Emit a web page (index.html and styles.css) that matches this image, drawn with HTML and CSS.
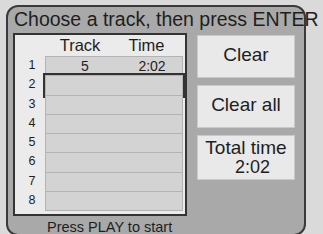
FILE: index.html
```html
<!DOCTYPE html>
<html>
<head>
  <meta name="viewport" content="width=device-width">
  <link rel="stylesheet" href="styles.css">
</head>
<body>

<div class="panel">
  <div class="title">Choose a track, then press ENTER</div>

  <div class="main">
    <div class="left">
      <div class="list">
        <div class="head">
          <span class="num"></span>
          <div class="cols">
            <span class="col-track">Track</span>
            <span class="col-time">Time</span>
          </div>
        </div>
        <div class="row"><span class="num">1</span><div class="cell cols"><span class="col-track">5</span><span class="col-time">2:02</span></div></div>
        <div class="row"><span class="num">2</span><div class="cell selected"></div></div>
        <div class="row"><span class="num">3</span><div class="cell"></div></div>
        <div class="row"><span class="num">4</span><div class="cell"></div></div>
        <div class="row"><span class="num">5</span><div class="cell"></div></div>
        <div class="row"><span class="num">6</span><div class="cell"></div></div>
        <div class="row"><span class="num">7</span><div class="cell"></div></div>
        <div class="row"><span class="num">8</span><div class="cell"></div></div>
      </div>
      <div class="hint">Press PLAY to start</div>
    </div>

    <div class="buttons">
      <div class="btn">Clear</div>
      <div class="btn">Clear all</div>
      <div class="btn total">
        <span>Total time</span>
        <span class="total-value">2:02</span>
      </div>
    </div>
  </div>
</div>

</body>
</html>
```

FILE: styles.css
```css
body {
  margin: 0;
  background-color: #dadada;
  font-family: "Liberation Sans", Arial, sans-serif;
  color: #1e1e1e;
  overflow: hidden;
}

.panel {
  box-sizing: border-box;
  width: 300px;
  height: 231px;
  margin: 5px 0 0 6px;
  padding: 1px 0 0 6px;
  background-color: #a9a9a9;
  border: 2px solid #3a3a3a;
  border-radius: 12px;
}

.title {
  font-size: 19.5px;
  line-height: 22px;
  white-space: nowrap;
}

.main {
  display: flex;
  gap: 10px;
  margin-top: 3px;
  margin-left: -1px;
}

/* track list */

.list {
  box-sizing: border-box;
  width: 174px;
  height: 183px;
  padding: 1px 2px 0 0;
  background-color: #ebebeb;
  border: 2px solid #333;
}

.head {
  display: flex;
  height: 18px;
  margin-bottom: 2px;
  font-size: 16.5px;
  line-height: 18px;
}

.cols {
  display: grid;
  grid-template-columns: 70px 68px;
  text-align: center;
}

.head .col-time {
  padding-right: 5px;
}

.row {
  display: flex;
  height: 19.25px;
}

.num {
  width: 30px;
  padding-left: 4px;
  box-sizing: border-box;
  text-align: center;
  font-size: 12.5px;
  line-height: 19px;
}

.cell {
  box-sizing: border-box;
  width: 138px;
  height: 20.25px;
  background-color: #d3d3d3;
  border: 1px solid #b3b3b3;
}

.cell.cols {
  font-size: 14px;
  line-height: 19px;
}

.cell .col-track {
  padding-left: 8px;
}

.cell .col-time {
  padding-left: 4px;
}

.cell.selected {
  outline: 2px solid #333;
}

.hint {
  margin-top: 3px;
  padding-left: 34px;
  font-size: 14.5px;
  line-height: 16px;
  white-space: nowrap;
}

/* buttons */

.buttons {
  display: flex;
  flex-direction: column;
  gap: 7px;
  width: 98px;
  margin-top: 2px;
}

.btn {
  box-sizing: border-box;
  height: 43px;
  display: flex;
  align-items: center;
  justify-content: center;
  padding-bottom: 4px;
  background-color: #e9e9e9;
  border: 1px solid #c9c9c9;
  font-size: 19px;
  line-height: 20px;
}

.btn.total {
  height: 45px;
  flex-direction: column;
  padding-bottom: 2px;
}

.total-value {
  padding-left: 13px;
  font-size: 18px;
  line-height: 18px;
}
```
